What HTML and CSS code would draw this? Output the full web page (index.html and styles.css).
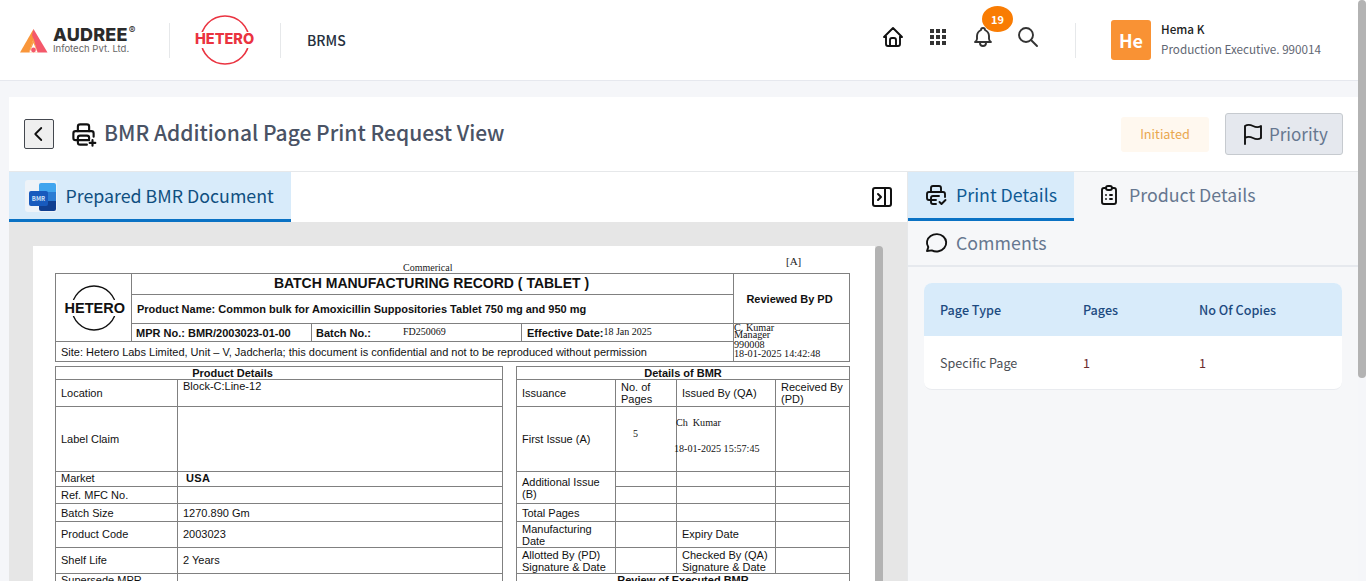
FILE: index.html
```html
<!DOCTYPE html>
<html lang="en">
<head>
    <meta charset="UTF-8">
    <meta name="viewport" content="width=device-width, initial-scale=1.0">
    <title>BMR Additional Page Print Request View</title>
    <link rel="stylesheet" href="styles.css">
</head>
<body>
    <header class="topbar">
        <div class="brand">
            <svg class="audree-mark" width="28" height="24" viewBox="0 0 28 24">
                <path d="M13.500 0 L0 23.500 H9 L13.500 10 Z" fill="#f9963a"/>
                <path d="M13.500 0 L27.500 23.500 H17.500 L12 6 Z" fill="#f4586a"/>
                <path d="M13.500 9 L9 23.500 H17.500 Z" fill="#f9963a" opacity="0.9"/>
                <path d="M9.500 23.500 L13.500 14 L17.500 23.500 Z" fill="#fff"/>
                <circle cx="13.500" cy="21" r="2.400" fill="#f4586a"/>
            </svg>
            <div class="audree-text">
                <div class="audree-name">AUDREE<sup>®</sup></div>
                <div class="audree-sub">Infotech Pvt. Ltd.</div>
            </div>
        </div>
        <div class="divider"></div>
        <div class="hetero-logo">
            <svg width="60" height="52" viewBox="0 0 60 52">
                <circle cx="30" cy="26" r="24" fill="none" stroke="#ea3340" stroke-width="1.6"/>
                <rect x="0" y="18" width="60" height="16" fill="#fff"/>
            </svg>
            <span class="hetero-text">HETERO</span>
        </div>
        <div class="divider"></div>
        <div class="app-name">BRMS</div>
        <nav class="top-icons">
            <svg class="top-icon" width="24" height="24" viewBox="0 0 24 24" fill="none" stroke="#111" stroke-width="1.9" stroke-linecap="round" stroke-linejoin="round">
                <path d="M5 12H3l9-9 9 9h-2"/><path d="M5 12v7a2 2 0 0 0 2 2h10a2 2 0 0 0 2-2v-7"/><path d="M9 21v-6a2 2 0 0 1 2-2h2a2 2 0 0 1 2 2v6"/>
            </svg>
            <svg class="top-icon" width="24" height="24" viewBox="0 0 24 24" fill="#333">
                <rect x="4" y="4" width="4" height="4"/><rect x="10" y="4" width="4" height="4"/><rect x="16" y="4" width="4" height="4"/>
                <rect x="4" y="10" width="4" height="4"/><rect x="10" y="10" width="4" height="4"/><rect x="16" y="10" width="4" height="4"/>
                <rect x="4" y="16" width="4" height="4"/><rect x="10" y="16" width="4" height="4"/><rect x="16" y="16" width="4" height="4"/>
            </svg>
            <div class="bell-wrap">
                <svg class="top-icon" width="24" height="24" viewBox="0 0 24 24" fill="none" stroke="#333" stroke-width="1.9" stroke-linecap="round" stroke-linejoin="round">
                    <path d="M10 5a2 2 0 1 1 4 0a7 7 0 0 1 4 6v3a4 4 0 0 0 2 3H4a4 4 0 0 0 2-3v-3a7 7 0 0 1 4-6"/><path d="M9 17v1a3 3 0 0 0 6 0v-1"/>
                </svg>
                <span class="badge">19</span>
            </div>
            <svg class="top-icon" width="24" height="24" viewBox="0 0 24 24" fill="none" stroke="#333" stroke-width="1.9" stroke-linecap="round">
                <circle cx="10" cy="10" r="7"/><path d="M21 21l-6-6"/>
            </svg>
        </nav>
        <div class="divider divider-user"></div>
        <div class="user">
            <div class="avatar">He</div>
            <div>
                <div class="user-name">Hema K</div>
                <div class="user-role">Production Executive. 990014</div>
            </div>
        </div>
    </header>

    <main class="card">
        <div class="title-row">
            <button class="back-btn">
                <svg width="18" height="18" viewBox="0 0 24 24" fill="none" stroke="#111" stroke-width="2.4" stroke-linecap="round" stroke-linejoin="round"><path d="M15 4l-8 8 8 8"/></svg>
            </button>
            <svg class="title-icon" width="27" height="27" viewBox="0 0 24 24" fill="none" stroke="#111" stroke-width="1.9" stroke-linecap="round" stroke-linejoin="round">
                <path d="M17 17H5a2 2 0 0 1-2-2v-4a2 2 0 0 1 2-2h14a2 2 0 0 1 2 2v3"/><path d="M17 9V5a2 2 0 0 0-2-2H9a2 2 0 0 0-2 2v4"/><path d="M15 21H9a2 2 0 0 1-2-2v-4a2 2 0 0 1 2-2h6a2 2 0 0 1 2 2v1"/><path d="M20 17v5M17.500 19.500h5"/>
            </svg>
            <h1>BMR Additional Page Print Request View</h1>
            <span class="status">Initiated</span>
            <button class="priority-btn">
                <svg width="24" height="26" viewBox="0 0 24 24" fill="none" stroke="#111" stroke-width="1.9" stroke-linecap="round" stroke-linejoin="round"><path d="M4 22V4c3-2 6-1 8 0s5 2 8 0v12c-3 2-6 1-8 0s-5-2-8 0"/></svg>
                <span class="priority-label">Priority</span>
            </button>
        </div>

        <div class="panes">
            <section class="left-pane">
                <div class="left-tabs">
                    <div class="doc-tab">
                        <div class="word-icon">
                            <span class="word-back"></span>
                            <span class="word-front">BMR</span>
                        </div>
                        <span class="tab-label">Prepared BMR Document</span>
                    </div>
                    <svg class="collapse-icon" width="24" height="24" viewBox="0 0 24 24" fill="none" stroke="#111" stroke-width="2" stroke-linecap="round" stroke-linejoin="round">
                        <rect x="3" y="3" width="18" height="18" rx="2"/><path d="M15 3v18"/><path d="M8 9l3 3-3 3"/>
                    </svg>
                </div>
                <div class="doc-area">
                    <div class="doc-page">
                        <div class="doc-head">
                            <span class="doc-commercial">Commerical</span>
                            <span class="doc-rev">[A]</span>
                        </div>
                        <table class="doc-table head-table">
                            <colgroup><col class="c-logo"><col class="c-mpr"><col class="c-batch"><col class="c-eff"><col class="c-rev"></colgroup>
                            <tr class="h21">
                                <td rowspan="3" class="logo-cell">
                                    <div class="doc-logo">
                                        <svg width="58" height="50" viewBox="0 0 58 50">
                                            <circle cx="29" cy="25" r="22" fill="none" stroke="#111" stroke-width="1.3"/>
                                            <rect x="0" y="17" width="58" height="16" fill="#fff"/>
                                        </svg>
                                        <span class="doc-logo-text">HETERO</span>
                                    </div>
                                </td>
                                <td colspan="3" class="doc-title">BATCH MANUFACTURING RECORD ( TABLET )</td>
                                <td rowspan="2" class="center bold reviewed">Reviewed By PD</td>
                            </tr>
                            <tr class="h29">
                                <td colspan="3" class="bold">Product Name: Common bulk for Amoxicillin Suppositories Tablet 750 mg and 950 mg</td>
                            </tr>
                            <tr class="h18">
                                <td class="bold shift">MPR No.: BMR/2003023-01-00</td>
                                <td class="bold shift">Batch No.:<span class="serif batch-val">FD250069</span></td>
                                <td class="bold">Effective Date:<span class="serif eff-val">18 Jan 2025</span></td>
                                <td rowspan="2" class="sign-cell serif">
                                    <div class="sign-tight">C. Kumar</div>
                                    <div class="sign-tight">Manager</div>
                                    <div class="sign-id">990008</div>
                                    <div class="sign-date">18-01-2025 14:42:48</div>
                                </td>
                            </tr>
                            <tr class="h20">
                                <td colspan="4">Site: Hetero Labs Limited, Unit – V, Jadcherla; this document is confidential and not to be reproduced without permission</td>
                            </tr>
                        </table>

                        <table class="doc-table body-table">
                            <colgroup><col class="b1"><col class="b2"><col class="b3"><col class="b4"><col class="b5"><col class="b6"><col class="b7"></colgroup>
                            <tr class="h13">
                                <td colspan="2" class="center bold product-head">Product Details</td>
                                <td class="spacer"></td>
                                <td colspan="4" class="center bold">Details of BMR</td>
                            </tr>
                            <tr class="h27">
                                <td>Location</td>
                                <td class="top-val">Block-C:Line-12</td>
                                <td class="spacer"></td>
                                <td>Issuance</td>
                                <td>No. of Pages</td>
                                <td>Issued By (QA)</td>
                                <td>Received By (PD)</td>
                            </tr>
                            <tr class="h65">
                                <td>Label Claim</td>
                                <td></td>
                                <td class="spacer"></td>
                                <td>First Issue (A)</td>
                                <td class="serif pages-val">5</td>
                                <td class="serif issued-val">
                                    <div class="issued-name">Ch&nbsp; Kumar</div>
                                    <div class="issued-date">18-01-2025 15:57:45</div>
                                </td>
                                <td></td>
                            </tr>
                            <tr class="h15">
                                <td class="lift">Market</td>
                                <td class="bold market-val lift">USA</td>
                                <td class="spacer"></td>
                                <td rowspan="2">Additional Issue (B)</td>
                                <td></td><td></td><td></td>
                            </tr>
                            <tr class="h17">
                                <td>Ref. MFC No.</td>
                                <td></td>
                                <td class="spacer"></td>
                                <td></td><td></td><td></td>
                            </tr>
                            <tr class="h18">
                                <td>Batch Size</td>
                                <td>1270.890 Gm</td>
                                <td class="spacer"></td>
                                <td>Total Pages</td>
                                <td></td><td></td><td></td>
                            </tr>
                            <tr class="h26">
                                <td class="lift">Product Code</td>
                                <td class="lift">2003023</td>
                                <td class="spacer"></td>
                                <td>Manufacturing Date</td>
                                <td></td>
                                <td class="lift">Expiry Date</td>
                                <td></td>
                            </tr>
                            <tr class="h26">
                                <td class="lift">Shelf Life</td>
                                <td class="lift">2 Years</td>
                                <td class="spacer"></td>
                                <td>Allotted By (PD) Signature &amp; Date</td>
                                <td></td>
                                <td>Checked By (QA) Signature &amp; Date</td>
                                <td></td>
                            </tr>
                            <tr class="h26">
                                <td class="top-val">Supersede MPR</td>
                                <td></td>
                                <td class="spacer"></td>
                                <td colspan="4" class="center bold top-val">Review of Executed BMR</td>
                            </tr>
                        </table>
                    </div>
                    <div class="doc-scroll"></div>
                </div>
            </section>

            <aside class="right-pane">
                <div class="right-tabs">
                    <div class="r-tab active">
                        <svg width="24" height="24" viewBox="0 0 24 24" fill="none" stroke="#111" stroke-width="1.9" stroke-linecap="round" stroke-linejoin="round">
                            <path d="M12 17H5a2 2 0 0 1-2-2v-4a2 2 0 0 1 2-2h14a2 2 0 0 1 2 2v3"/><path d="M17 9V5a2 2 0 0 0-2-2H9a2 2 0 0 0-2 2v4"/><path d="M12 21H9a2 2 0 0 1-2-2v-4a2 2 0 0 1 2-2h6"/><path d="M15.500 19l2 2 4-4"/>
                        </svg>
                        <span class="tab-label">Print Details</span>
                    </div>
                    <div class="r-tab">
                        <svg width="24" height="24" viewBox="0 0 24 24" fill="none" stroke="#111" stroke-width="1.9" stroke-linecap="round" stroke-linejoin="round">
                            <path d="M9 5H7a2 2 0 0 0-2 2v12a2 2 0 0 0 2 2h10a2 2 0 0 0 2-2V7a2 2 0 0 0-2-2h-2"/><rect x="9" y="3" width="6" height="4" rx="2"/><path d="M9 12h.01M13 12h2M9 16h.01M13 16h2"/>
                        </svg>
                        <span class="tab-label">Product Details</span>
                    </div>
                    <div class="r-tab r-tab-comments">
                        <svg width="24" height="24" viewBox="0 0 24 24" fill="none" stroke="#111" stroke-width="1.9" stroke-linecap="round" stroke-linejoin="round">
                            <path d="M3 20l1.300-3.900C1.800 12.400 2.800 7.700 6.600 5c3.800-2.700 9.300-2.500 12.700.5 3.400 3 3.900 7.900 1 11.400-2.900 3.500-8.200 4.600-12.500 2.500L3 20"/>
                        </svg>
                        <span class="tab-label">Comments</span>
                    </div>
                </div>
                <div class="print-card">
                    <div class="print-row print-head">
                        <span>Page Type</span><span>Pages</span><span>No Of Copies</span>
                    </div>
                    <div class="print-row print-body">
                        <span>Specific Page</span><span class="num">1</span><span class="num">1</span>
                    </div>
                </div>
            </aside>
        </div>
    </main>
    <div class="page-scroll"></div>
</body>
</html>
```

FILE: styles.css
```css
* {
    box-sizing: border-box;
}
html, body {
    height: 581px;
    overflow: hidden;
}
body {
    margin: 0;
    background-color: #f5f6f9;
    font-family: "Noto Sans CJK JP", "Noto Sans", sans-serif;
    color: #333;
    position: relative;
}
.topbar {
    height: 81px;
    background-color: #fff;
    border-bottom: 1px solid #e6e8ee;
    display: flex;
    align-items: center;
    padding-left: 20px;
}
.brand {
    display: flex;
    align-items: center;
    width: 149px;
    gap: 5px;
}
.audree-mark {
    margin-top: 1px;
}
.audree-name {
    font-family: "Inter", sans-serif;
    font-weight: 800;
    font-size: 18px;
    line-height: 17px;
    color: #2b2b2b;
    letter-spacing: 0.2px;
}
.audree-name sup {
    font-size: 10px;
    font-weight: 400;
    line-height: 0;
    margin-left: 1px;
}
.audree-sub {
    font-family: "Inter", sans-serif;
    font-size: 9.5px;
    line-height: 11px;
    color: #666;
}
.divider {
    width: 1px;
    height: 35px;
    background-color: #e6e8ea;
    flex-shrink: 0;
}
.hetero-logo {
    position: relative;
    width: 60px;
    height: 52px;
    margin: 0 25px 0 25px;
    flex-shrink: 0;
}
.hetero-logo svg {
    display: block;
}
.hetero-text {
    position: absolute;
    left: 0;
    top: 15px;
    font-family: "Inter", sans-serif;
    font-weight: 800;
    font-size: 14.5px;
    line-height: 20px;
    color: #ea3340;
}
.app-name {
    margin-left: 26px;
    font-size: 14px;
    font-weight: 500;
    color: #26303e;
}
.top-icons {
    margin-left: auto;
    display: flex;
    align-items: center;
    gap: 21px;
    margin-top: -6px;
}
.top-icon {
    display: block;
}
.bell-wrap {
    position: relative;
}
.badge {
    position: absolute;
    left: 11px;
    top: -19px;
    width: 31px;
    height: 26px;
    border-radius: 50%;
    background-color: #f97c03;
    color: #fff;
    font-size: 11px;
    font-weight: 700;
    line-height: 26px;
    text-align: center;
}
.divider-user {
    margin-left: 35px;
}
.user {
    display: flex;
    align-items: center;
    gap: 10px;
    margin-left: 35px;
    width: 255px;
}
.avatar {
    width: 40px;
    height: 40px;
    border-radius: 3px;
    background-color: #f99234;
    color: #fff;
    font-size: 18px;
    font-weight: 700;
    line-height: 40px;
    text-align: center;
}
.user-name {
    font-size: 11.7px;
    font-weight: 500;
    line-height: 18px;
    color: #222;
}
.user-role {
    font-size: 11.7px;
    line-height: 22px;
    color: #5f6672;
}

.card {
    margin: 16px 8px 0 9px;
    background-color: #fff;
}
.title-row {
    height: 75px;
    display: flex;
    align-items: center;
    padding: 0 15px;
    border-bottom: 1px solid #e6e8ea;
}
.back-btn {
    width: 30px;
    height: 30px;
    padding: 0;
    background-color: #efefef;
    border: 1px solid #44484f;
    border-radius: 2px;
    display: flex;
    align-items: center;
    justify-content: center;
}
.title-icon {
    margin-left: 16px;
}
h1 {
    margin: 0 0 5px 7px;
    font-size: 21px;
    font-weight: 500;
    color: #4a5365;
}
.status {
    margin-left: auto;
    width: 88px;
    height: 35px;
    background-color: #fff8ef;
    border-radius: 3px;
    color: #e9a74e;
    font-size: 12.7px;
    line-height: 33px;
    text-align: center;
}
.priority-btn {
    margin-left: 16px;
    width: 118px;
    height: 42px;
    padding: 0 0 0 15px;
    background-color: #e5e8ee;
    border: 1px solid #c6cacf;
    border-radius: 3px;
    display: flex;
    align-items: center;
    gap: 3px;
    font-family: inherit;
    font-size: 17px;
    color: #667790;
}
.priority-label {
    margin-bottom: 2px;
    margin-left: 1px;
}

.panes {
    display: flex;
    height: 420px;
}
.left-pane {
    width: 899px;
    border-right: 1px solid #e6e8ea;
}
.left-tabs {
    height: 50px;
    display: flex;
    align-items: center;
    justify-content: space-between;
    padding-right: 13px;
}
.doc-tab {
    width: 282px;
    height: 50px;
    padding-left: 16px;
    background-color: #d8ebfa;
    border-bottom: 3px solid #0a72c4;
    display: flex;
    align-items: center;
    gap: 8.500px;
    font-size: 17.8px;
    color: #0f4f80;
    white-space: nowrap;
}
.tab-label {
    line-height: 24px;
    margin-bottom: 2px;
}
.word-icon {
    position: relative;
    width: 32px;
    height: 32px;
    background-color: #eef3f8;
    border-radius: 3px;
    flex-shrink: 0;
}
.word-back {
    position: absolute;
    left: 14px;
    top: 3px;
    width: 17px;
    height: 28px;
    background: linear-gradient(to bottom, #41a5ee 33%, #2b7cd3 33%, #2b7cd3 66%, #103f91 66%);
    border-radius: 2px;
}
.word-front {
    position: absolute;
    left: 4px;
    top: 11px;
    width: 19px;
    height: 15px;
    background-color: #185abd;
    border-radius: 2px;
    color: #cfe2f8;
    font-size: 6px;
    font-weight: 700;
    line-height: 15px;
    text-align: center;
}
.doc-area {
    height: 370px;
    padding: 24px 0 0 24px;
    background-color: #e6e6e6;
    display: flex;
    overflow: hidden;
}
.doc-page {
    width: 842px;
    height: 500px;
    padding: 0 0 0 22px;
    background-color: #fff;
    flex-shrink: 0;
}
.doc-scroll {
    width: 8px;
    height: 400px;
    background-color: #b3b3b3;
    border-radius: 4px 4px 0 0;
    flex-shrink: 0;
}
.doc-head {
    height: 27px;
    position: relative;
    font-family: "Liberation Serif", serif;
    color: #222;
}
.doc-commercial {
    position: absolute;
    left: 348px;
    top: 16px;
    font-size: 10px;
    line-height: 11px;
}
.doc-rev {
    position: absolute;
    left: 731px;
    top: 9px;
    font-size: 11px;
    line-height: 13px;
}
.doc-table {
    width: 794px;
    border-collapse: collapse;
    table-layout: fixed;
    font-family: "Liberation Sans", Arial, sans-serif;
    font-size: 11px;
    color: #111;
}
.doc-table td {
    border: 1px solid #808080;
    padding: 0 5px;
    line-height: 12px;
    overflow: hidden;
}
.body-table {
    margin-top: 4px;
}
.c-logo { width: 76px; }
.c-mpr { width: 180px; }
.c-batch { width: 210px; }
.c-eff { width: 212px; }
.c-rev { width: 116px; }
.b1 { width: 122px; }
.b2 { width: 325px; }
.b3 { width: 14px; }
.b4 { width: 99px; }
.b5 { width: 61px; }
.b6 { width: 99px; }
.b7 { width: 74px; }
.h13 { height: 13px; }
.h15 { height: 15px; }
.h17 { height: 17px; }
.h18 { height: 18px; }
.h20 { height: 20px; }
.h21 { height: 21px; }
.h26 { height: 26px; }
.h27 { height: 27px; }
.h29 { height: 29px; }
.h65 { height: 65px; }
.center { text-align: center; }
.bold { font-weight: 700; }
.serif { font-family: "Liberation Serif", serif; }
.doc-table .logo-cell { padding: 0; }
.doc-table .shift { padding-left: 4px; }
.doc-table .lift { padding-bottom: 2px; }
.doc-table .reviewed { padding-right: 9px; }
.doc-table .product-head { padding-right: 98px; }
.doc-logo {
    position: relative;
    width: 58px;
    height: 50px;
    margin: 0 auto;
}
.doc-logo svg {
    display: block;
}
.doc-logo-text {
    position: absolute;
    left: 0;
    top: 15px;
    font-weight: 700;
    font-size: 14.5px;
    line-height: 20px;
}
.doc-table .doc-title {
    font-size: 14px;
    font-weight: 700;
    text-align: center;
    padding-bottom: 2px;
    padding-right: 7px;
}
.batch-val, .eff-val {
    font-weight: 400;
    font-size: 10px;
    vertical-align: 2px;
}
.batch-val { margin-left: 32px; }
.doc-table .sign-cell {
    font-size: 10.2px;
    padding: 0;
    white-space: nowrap;
    vertical-align: top;
}
.sign-tight { line-height: 7px; }
.sign-id { line-height: 8px; margin-top: 3px; }
.sign-date { line-height: 10px; }
.doc-table .spacer {
    border-top: none;
    border-bottom: none;
}
.doc-table .top-val { vertical-align: top; }
.doc-table .market-val { padding-left: 8px; letter-spacing: 0.4px; }
.doc-table .pages-val {
    font-size: 10px;
    padding: 0 0 10px 17px;
}
.doc-table .issued-val {
    vertical-align: top;
    padding: 10px 0 0 0;
    font-size: 10.1px;
    white-space: nowrap;
    overflow: visible;
}
.issued-name { margin-left: -1px; }
.issued-date { margin: 14px 0 0 -3px; }

.right-pane {
    flex: 1;
    background-color: #f6f7f9;
}
.right-tabs {
    display: flex;
    flex-wrap: wrap;
    align-content: flex-start;
    height: 95px;
    border-bottom: 2px solid #e6e9ee;
}
.r-tab {
    height: 49px;
    padding: 0 16px;
    display: flex;
    align-items: center;
    gap: 8px;
    font-size: 17.8px;
    color: #667790;
    border-bottom: 3px solid transparent;
    white-space: nowrap;
}
.r-tab.active {
    background-color: #d8ebfa;
    border-bottom-color: #0a72c4;
    color: #0f5a94;
    width: 166px;
    margin-right: 7px;
}
.r-tab-comments {
    height: 44px;
    border-bottom: none;
}
.print-card {
    margin: 16px 16px 0;
    border-radius: 8px;
    overflow: hidden;
    background-color: #fff;
    border-bottom: 1px solid #e9ebef;
}
.print-row {
    display: grid;
    grid-template-columns: 143px 116px 1fr;
    height: 53px;
    padding-left: 16px;
    align-items: center;
    font-size: 12.6px;
}
.print-head {
    background-color: #d8ebfa;
    color: #1d4a80;
    font-weight: 500;
}
.print-body {
    color: #4b4f56;
}
.print-body .num {
    color: #6b2c2c;
}
.page-scroll {
    position: absolute;
    right: 0;
    top: 0;
    width: 8px;
    height: 378px;
    background-color: #b3b3b3;
    border-radius: 4px;
}
```
